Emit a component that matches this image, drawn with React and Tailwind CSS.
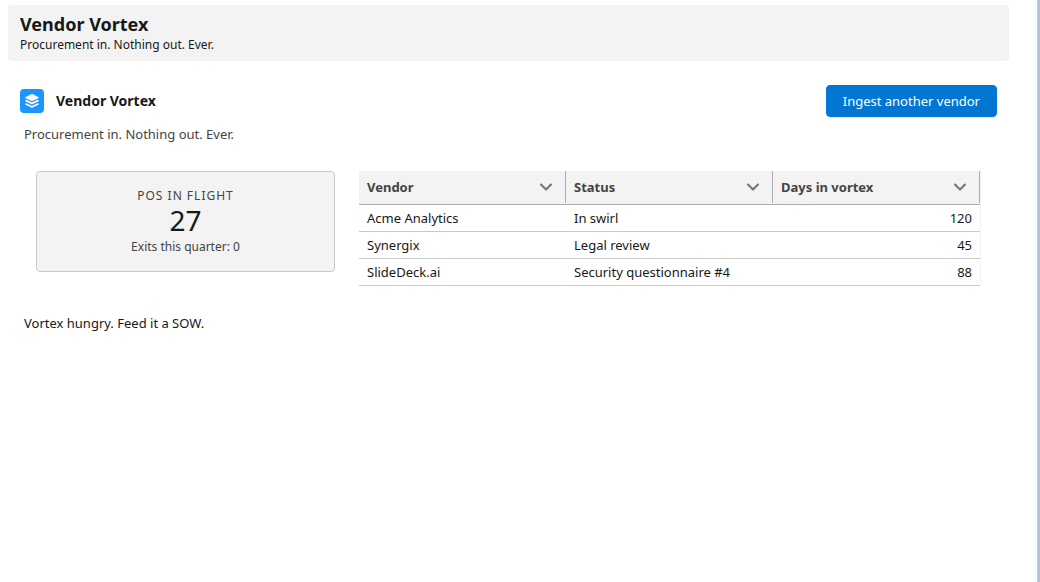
import { ChevronDown } from "lucide-react";
import clsx from "clsx";

const columns = ["Vendor", "Status", "Days in vortex"];

const vendors = [
    { name: "Acme Analytics", status: "In swirl", days: 120 },
    { name: "Synergix", status: "Legal review", days: 45 },
    { name: "SlideDeck.ai", status: "Security questionnaire #4", days: 88 },
];

const LayersIcon = () => (
    <svg viewBox="0 0 24 24" className="size-6 rounded-sm bg-[#1b96ff]" fill="#fff" aria-hidden="true">
        <path d="M11.6 5.1 5.3 8.2c-.4.2-.4.6 0 .8l6.3 3.1c.3.1.5.1.8 0L18.7 9c.4-.2.4-.6 0-.8l-6.3-3.1c-.3-.1-.5-.1-.8 0Z" />
        <path d="m18.7 11.4-1.2-.6-4.4 2.2c-.7.3-1.5.3-2.2 0l-4.4-2.2-1.2.6c-.4.2-.4.6 0 .8l6.3 3.1c.3.1.5.1.8 0l6.3-3.1c.4-.2.4-.6 0-.8Z" />
        <path d="m18.7 14.8-1.2-.6-4.4 2.2c-.7.3-1.5.3-2.2 0l-4.4-2.2-1.2.6c-.4.2-.4.6 0 .8l6.3 3.1c.3.1.5.1.8 0l6.3-3.1c.4-.2.4-.6 0-.8Z" />
    </svg>
);

const StatCard = () => (
    <div className="rounded-sm border border-[#c9c9c9] bg-[#f3f3f3] pt-4 pb-[13px] text-center text-[#444]">
        <p className="text-xs leading-4 tracking-[1px] uppercase">POs in flight</p>
        <p className="text-[28px] leading-8 text-[#181818]">27</p>
        <p className="text-xs leading-[22px]">Exits this quarter: 0</p>
    </div>
);

const VendorTable = () => (
    <table className="w-full table-fixed border-separate border-spacing-0 border-r border-[#f3f3f3] text-[13px]">
        <thead>
            <tr>
                {columns.map((column) => (
                    <th key={column} scope="col" className="border-b border-[#aeaeae] bg-[#f3f3f3] p-0 pb-px text-left font-bold text-[#444]">
                        <div className="flex h-8 items-center justify-between border-r border-[#aeaeae] pr-[11px] pl-2">
                            {column}
                            <button type="button" aria-label={`${column} column actions`}>
                                <ChevronDown className="size-4 scale-125 text-[#747474]" strokeWidth={2.5} />
                            </button>
                        </div>
                    </th>
                ))}
            </tr>
        </thead>
        <tbody>
            {vendors.map((vendor) => (
                <tr key={vendor.name}>
                    {[vendor.name, vendor.status, vendor.days].map((value, i) => (
                        <td key={columns[i]} className={clsx("h-[27px] border-b border-[#c9c9c9] px-2 py-0 leading-5", i === 2 && "text-right")}>
                            {value}
                        </td>
                    ))}
                </tr>
            ))}
        </tbody>
    </table>
);

const App = () => {
    return (
        <div className="min-h-screen border-r-2 border-[#b0c4df] bg-white font-['Noto_Sans',sans-serif] text-[13px] leading-[18px] text-[#181818]">
            <div className="min-h-screen border-r border-[#c9c9c9] pt-[5px] pr-7 pl-2">
                <header className="rounded-sm bg-[#f3f3f3] px-3 pt-2 pb-1.5">
                    <h1 className="text-lg leading-[22px] font-bold">Vendor Vortex</h1>
                    <p className="text-xs leading-5">Procurement in. Nothing out. Ever.</p>
                </header>

                <main className="px-3 pt-6">
                    <div className="flex items-center justify-between">
                        <div className="flex items-center gap-3">
                            <LayersIcon />
                            <h2 className="text-sm font-bold">Vendor Vortex</h2>
                        </div>
                        <button type="button" className="h-8 rounded-sm border border-[#0176d3] bg-[#0176d3] px-4 text-white">
                            Ingest another vendor
                        </button>
                    </div>

                    <div className="px-1 pt-2">
                        <p className="text-[#444]">Procurement in. Nothing out. Ever.</p>
                        <div className="grid grid-cols-3 pt-4">
                            <div className="p-3">
                                <StatCard />
                            </div>
                            <div className="col-span-2 p-3">
                                <VendorTable />
                            </div>
                        </div>
                        <p className="pt-4">Vortex hungry. Feed it a SOW.</p>
                    </div>
                </main>
            </div>
        </div>
    );
};

export default App;
